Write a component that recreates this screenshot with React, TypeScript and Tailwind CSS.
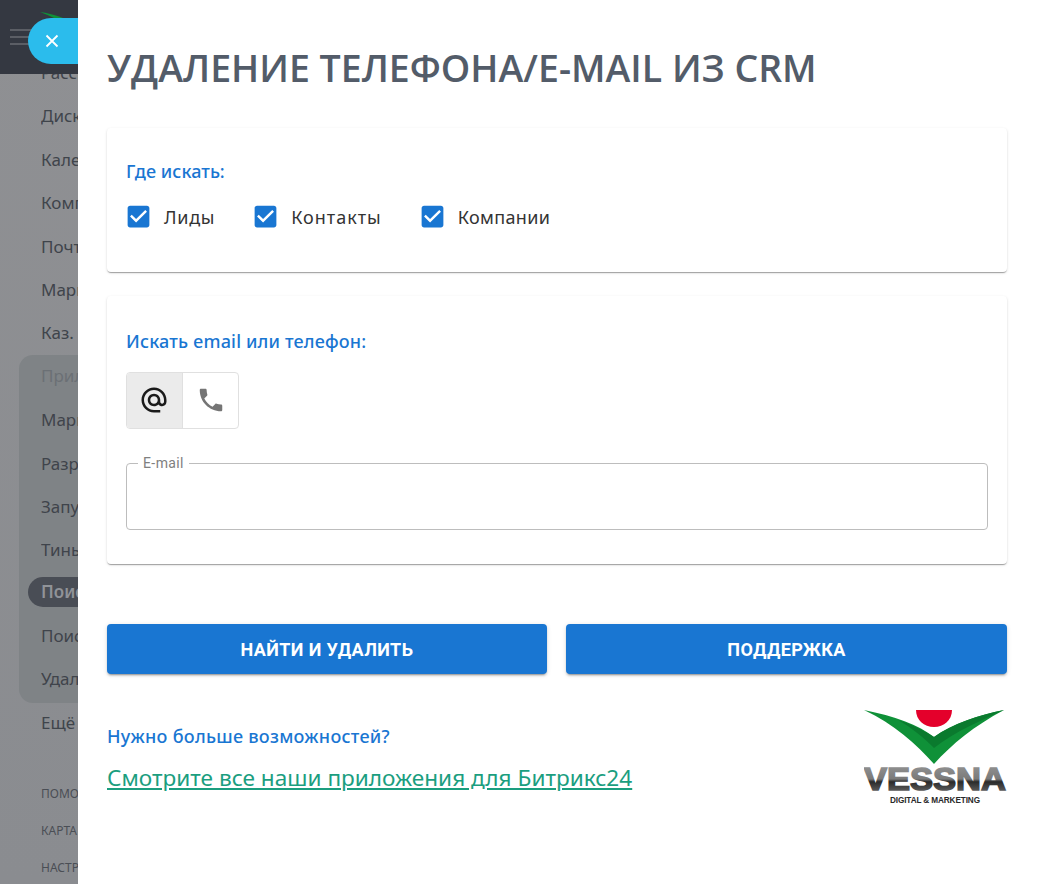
const menuTop = ["Рассылки", "Диск", "Календарь", "Компания", "Почта", "Маркетинг", "Каз."];
const menuApps = ["Маркетплейс", "Разработчикам", "Запуск", "Тинькофф"];
const menuFoot = ["ПОМОЩЬ", "КАРТА САЙТА", "НАСТРОЙКИ"];

function MenuRow({ label }: { label: string }) {
  return <div className="h-[43.4px] truncate text-[17px] leading-[43.4px] text-[#3f444b]">{label}</div>;
}

function Sidebar() {
  return (
    <aside className="relative w-[78px] shrink-0 overflow-hidden bg-gradient-to-b from-[#8f9093] to-[#8a8c90]">
      <header className="relative z-10 flex h-[74px] items-center bg-[#343841] pl-[10px]">
        <div className="flex w-[22px] flex-col gap-[5px]">
          <span className="h-[2px] bg-[#5b5e65]" />
          <span className="h-[2px] bg-[#5b5e65]" />
          <span className="h-[2px] bg-[#5b5e65]" />
        </div>
        <svg width="38" height="16" viewBox="0 0 38 16" className="absolute left-[40px] top-[12px]">
          <path d="M0 0C14 2 26 6 38 14V16H30C20 8 10 4 0 0z" fill="#0f9138" />
        </svg>
      </header>
      <nav className="-mt-[23px] w-[300px] pl-[41px]">
        {menuTop.map((m) => (
          <MenuRow key={m} label={m} />
        ))}
        <div className="-ml-[22px] h-[348px] w-[200px] rounded-[14px] bg-[#7f8386] pl-[22px]">
          <div className="h-[43.4px] truncate text-[17px] leading-[41px] text-[#6b7075]">Приложения</div>
          {menuApps.map((m) => (
            <MenuRow key={m} label={m} />
          ))}
          <div className="-ml-[13px] mt-[5px] h-[30px] rounded-full bg-[#494d55] pl-[13px] text-[17px] font-semibold leading-[29px] text-[#909398]">
            Поиск
          </div>
          <div className="h-[7px]" />
          <MenuRow label="Поиск дублей" />
          <MenuRow label="Удаление" />
        </div>
        <div className="-mt-[2px]">
          <MenuRow label="Ещё" />
        </div>
        <div className="mt-[31px]">
          {menuFoot.map((m) => (
            <div key={m} className="h-[37px] truncate text-[12px] leading-[37px] text-[#4a4e55]">
              {m}
            </div>
          ))}
        </div>
      </nav>
    </aside>
  );
}

function Logo() {
  return (
    <svg width="143" height="96" viewBox="0 0 143 96" className="block">
      <defs>
        <linearGradient id="wordmark" x1="0" y1="0" x2="0" y2="1">
          <stop offset="0.2" stopColor="#8c8c8c" />
          <stop offset="0.5" stopColor="#7a7a7a" />
          <stop offset="0.58" stopColor="#2a2a2a" />
          <stop offset="0.85" stopColor="#5c5c5c" />
        </linearGradient>
      </defs>
      <path d="M52 0h36c0 10-8 17-18 17S52 10 52 0z" fill="#e4002b" />
      <path d="M0 0C30 6 55 15 70 27 88 14 115 5 140 0 110 16 88 34 70 54 52 34 30 14 0 0z" fill="#0f9138" />
      <path d="M34 10C50 15 62 22 70 27 88 14 115 5 140 0 118 10 90 22 70 38 60 28 48 18 34 10z" fill="#0a7a2e" />
      <text
        x="71"
        y="79.5"
        textAnchor="middle"
        fontFamily="Liberation Sans"
        fontWeight="700"
        fontSize="31"
        textLength="142"
        lengthAdjust="spacingAndGlyphs"
        fill="url(#wordmark)"
        stroke="url(#wordmark)"
        strokeWidth="1.5"
      >
        VESSNA
      </text>
      <text x="71" y="93" textAnchor="middle" fontFamily="Liberation Sans" fontWeight="700" fontSize="8.2" textLength="90" fill="#2a2a2a">
        DIGITAL &amp; MARKETING
      </text>
    </svg>
  );
}

type CheckItemProps = {
  label: string;
  className: string;
};

function CheckItem({ label, className }: CheckItemProps) {
  return (
    <label className="flex items-center gap-[11px]">
      <svg width="29" height="29" viewBox="0 0 24 24" fill="#1976d2" className="block">
        <path d="M19 3H5c-1.11 0-2 .9-2 2v14c0 1.1.89 2 2 2h14c1.11 0 2-.9 2-2V5c0-1.1-.89-2-2-2zm-9 14l-5-5 1.41-1.41L10 14.17l7.59-7.59L19 8l-9 9z" />
      </svg>
      <span className={`text-[18px] leading-[24px] text-[#333] ${className}`}>{label}</span>
    </label>
  );
}

const cardShadow = "rounded-[4px] bg-white px-[19px] shadow-[0_2px_1px_-1px_rgba(0,0,0,0.2),0_1px_1px_0_rgba(0,0,0,0.14),0_1px_3px_0_rgba(0,0,0,0.12)]";
const buttonClass =
  "h-[50px] rounded-[4px] bg-[#1976d2] font-['Roboto',sans-serif] text-[18px] font-bold tracking-[0.4px] text-white shadow-[0_3px_1px_-2px_rgba(0,0,0,0.2),0_2px_2px_0_rgba(0,0,0,0.14),0_1px_5px_0_rgba(0,0,0,0.12)]";

export default function App() {
  return (
    <div className="relative flex h-[884px] w-[1055px] overflow-hidden font-['Noto_Sans',sans-serif]">
      <Sidebar />
      <main className="flex-1 rounded-tl-[10px] bg-white pl-[29px] pr-[48px]">
        <h1 className="pt-[43px] font-['Open_Sans',sans-serif] text-[37.5px] font-semibold leading-[50px] text-[#535c69]">
          УДАЛЕНИЕ ТЕЛЕФОНА/E-MAIL ИЗ CRM
        </h1>
        <section className={`mt-[35px] h-[144px] pt-[30px] ${cardShadow}`}>
          <h2 className="text-[18px] font-medium leading-[26px] tracking-[0.06px] text-[#1976d2]">Где искать:</h2>
          <div className="-ml-[2px] mt-[17px] flex gap-[36px] pt-[1px]">
            <CheckItem label="Лиды" className="tracking-[0.7px]" />
            <CheckItem label="Контакты" className="tracking-[1px]" />
            <CheckItem label="Компании" className="tracking-[0.35px]" />
          </div>
        </section>
        <section className={`mt-[24px] h-[268px] pt-[32px] ${cardShadow}`}>
          <h2 className="text-[18px] font-medium leading-[26px] tracking-[0.16px] text-[#1976d2]">Искать email или телефон:</h2>
          <div className="mt-[18px] flex h-[57px] w-[113px] rounded-[4px] border border-[#e0e0e0]">
            <span className="flex w-[56px] items-center justify-center rounded-l-[3px] border-r border-[#e0e0e0] bg-[#ebebeb] pb-[2px] pr-[2px]">
              <svg width="30" height="30" viewBox="0 0 24 24" fill="#1a1a1a">
                <path d="M12 2C6.48 2 2 6.48 2 12s4.48 10 10 10h5v-2h-5c-4.34 0-8-3.66-8-8s3.66-8 8-8 8 3.66 8 8v1.43c0 .79-.71 1.57-1.5 1.57s-1.5-.78-1.5-1.57V12c0-2.76-2.24-5-5-5s-5 2.24-5 5 2.24 5 5 5c1.38 0 2.64-.56 3.54-1.47.65.89 1.77 1.47 2.96 1.47 1.97 0 3.5-1.6 3.5-3.57V12c0-5.52-4.48-10-10-10zm0 13c-1.66 0-3-1.34-3-3s1.34-3 3-3 3 1.34 3 3-1.34 3-3 3z" />
              </svg>
            </span>
            <span className="flex flex-1 items-center justify-center pb-[2px]">
              <svg width="30" height="30" viewBox="0 0 24 24" fill="#757575">
                <path d="M6.62 10.79c1.44 2.83 3.76 5.14 6.59 6.59l2.2-2.2c.27-.27.67-.36 1.02-.24 1.12.37 2.33.57 3.57.57.55 0 1 .45 1 1V20c0 .55-.45 1-1 1-9.39 0-17-7.61-17-17 0-.55.45-1 1-1h3.5c.55 0 1 .45 1 1 0 1.25.2 2.45.57 3.57.11.35.03.74-.25 1.02l-2.2 2.2z" />
              </svg>
            </span>
          </div>
          <fieldset className="mt-[27px] h-[74px] rounded-[4px] border border-[#bdbdbd] pl-[11px]">
            <legend className="px-[5px] font-['Roboto',sans-serif] text-[14px] leading-[14px] tracking-[0.4px] text-[#808080]">E-mail</legend>
          </fieldset>
        </section>
        <div className="mt-[60px] flex gap-[19px]">
          <button className={`w-[440px] ${buttonClass}`}>НАЙТИ И УДАЛИТЬ</button>
          <button className={`flex-1 ${buttonClass}`}>ПОДДЕРЖКА</button>
        </div>
        <div className="mt-[36px] flex items-start justify-between">
          <div className="pt-[13px]">
            <p className="text-[18px] font-medium leading-[26px] tracking-[0.27px] text-[#1976d2]">Нужно больше возможностей?</p>
            <a href="#" className="mt-[14px] block text-[22.6px] leading-[30px] text-[#1b9e7f] underline">
              Смотрите все наши приложения для Битрикс24
            </a>
          </div>
          <Logo />
        </div>
      </main>
      <button className="absolute left-[28px] top-[18px] z-20 flex h-[46px] w-[50px] items-center justify-center rounded-l-[23px] bg-[#2bbcec] pr-[2px] text-white">
        <svg width="14" height="14" viewBox="0 0 14 14" fill="none" stroke="currentColor" strokeWidth="1.8">
          <path d="M1.5 1.5l11 11M12.5 1.5l-11 11" />
        </svg>
      </button>
    </div>
  );
}
